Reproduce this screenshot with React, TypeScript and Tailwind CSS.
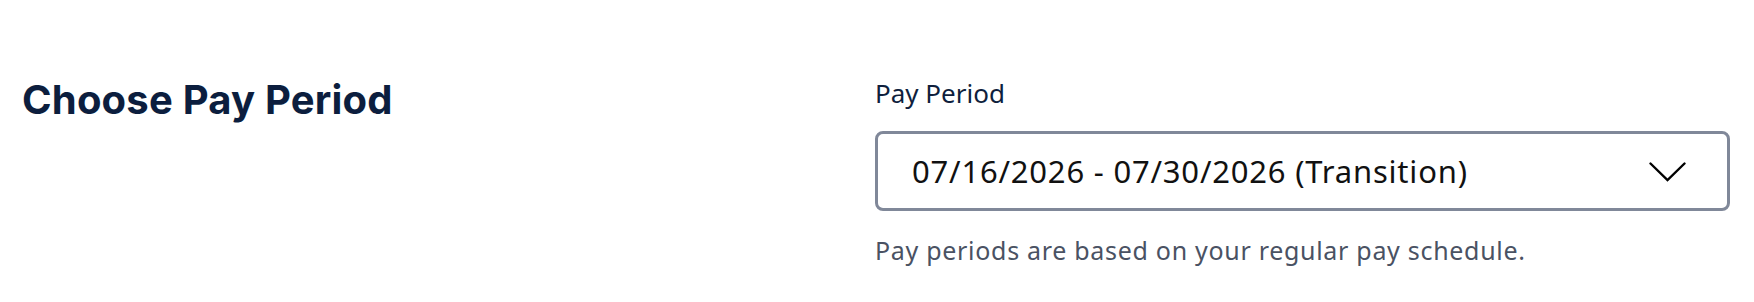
export default function App() {
  return (
    <div className="flex h-[302px] w-full bg-white pl-[22px] pr-6 pt-[75px] font-['Noto_Sans',sans-serif]">
      <div className="flex-1">
        <h1 className="font-['Inter',sans-serif] text-[40px] font-bold leading-[50px] tracking-[0.2px] text-[#0c1e3e]">
          Choose Pay Period
        </h1>
      </div>

      <div className="w-[855px]">
        <label className="block text-[26px] leading-[36px] text-[#0f1f3d]">Pay Period</label>
        <button className="mt-[20px] flex h-[80px] w-full items-center justify-between rounded-[8px] border-[3px] border-[#808899] bg-white pl-[34px] pr-[41px] text-left">
          <span className="text-[31px] tracking-[0.8px] text-[#111111]">07/16/2026 - 07/30/2026 (Transition)</span>
          {/* chevron */}
          <svg width="37" height="20" viewBox="0 0 37 20" fill="none" className="mt-[2px]">
            <polyline points="1.5,1.5 18.5,18 35.5,1.5" stroke="#000" strokeWidth="2.4" strokeLinecap="round" strokeLinejoin="miter" />
          </svg>
        </button>
        <p className="mt-[21px] text-[25px] tracking-[0.7px] text-[#4a5263]">Pay periods are based on your regular pay schedule.</p>
      </div>
    </div>
  );
}
